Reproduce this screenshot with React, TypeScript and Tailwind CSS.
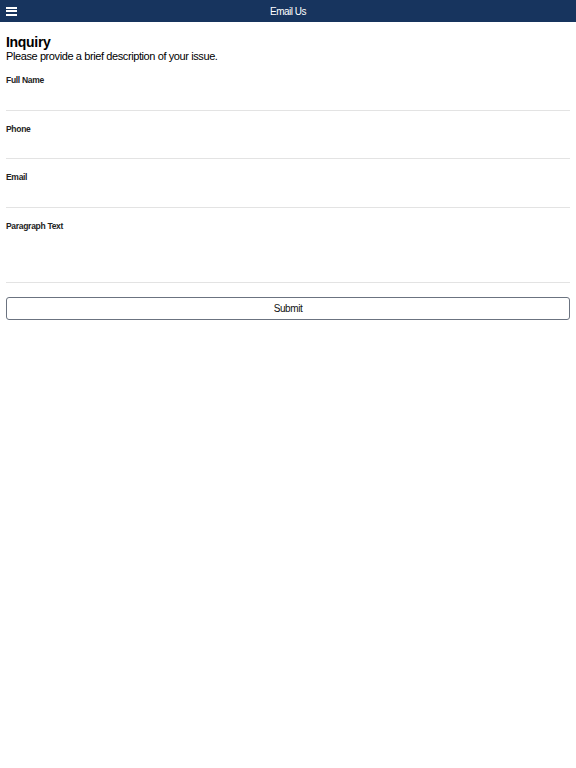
export default function App() {
  const fields = ["Full Name", "Phone", "Email"];
  return (
    <div className="min-h-screen bg-white" style={{ fontFamily: '"Liberation Sans", Arial, sans-serif' }}>
      {/* Header */}
      <div className="relative h-[22px] bg-[#17345e] flex items-center justify-center">
        <button className="absolute left-[6px] top-[6.5px] flex flex-col gap-[1.5px]">
          <span className="block w-[11px] h-[2px] bg-white" />
          <span className="block w-[11px] h-[2px] bg-white" />
          <span className="block w-[11px] h-[2px] bg-white" />
        </button>
        <span className="text-white text-[10px] tracking-[-0.5px]">Email Us</span>
      </div>

      <div className="px-[6px] pt-[12px]">
        <h1 className="text-[14px] font-bold leading-[16px] tracking-[-0.3px] text-black">Inquiry</h1>
        <p className="text-[11px] leading-[12px] tracking-[-0.4px] text-black">
          Please provide a brief description of your issue.
        </p>

        {fields.map((f) => (
          <div key={f} className="pt-[13px]">
            <label className="block text-[8.5px] font-bold leading-[10px] tracking-[-0.3px] text-[#222]">{f}</label>
            <input className="block w-full h-[25.5px] border-b border-[#e3e3e3] outline-none text-[10px]" />
          </div>
        ))}
        <div className="pt-[13px]">
          <label className="block text-[8.5px] font-bold leading-[10px] tracking-[-0.3px] text-[#222]">Paragraph Text</label>
          <textarea className="block w-full h-[52.5px] border-b border-[#e3e3e3] outline-none resize-none text-[10px]" />
        </div>

        <button className="mt-[14px] w-full h-[23px] border border-[#6b7380] rounded-[3px] text-[10px] tracking-[-0.4px] text-[#111] bg-white">
          Submit
        </button>
      </div>
    </div>
  );
}
